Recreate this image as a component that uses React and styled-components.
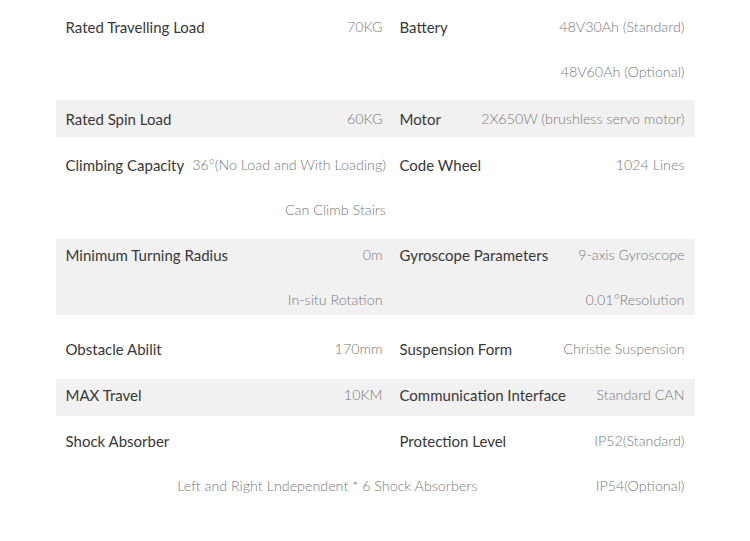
import React from 'react';
import styled, { createGlobalStyle } from 'styled-components';

const specs = [
    {
        height: 100,
        offset: -1,
        left: { label: 'Rated Travelling Load', values: ['70KG'] },
        right: { label: 'Battery', values: ['48V30Ah (Standard)', '48V60Ah (Optional)'] },
    },
    {
        height: 37,
        shaded: true,
        left: { label: 'Rated Spin Load', values: ['60KG'] },
        right: { label: 'Motor', values: ['2X650W (brushless servo motor)'] },
    },
    {
        height: 102,
        offset: -1,
        left: { label: 'Climbing Capacity', values: ['36°(No Load and With Loading)', 'Can Climb Stairs'] },
        right: { label: 'Code Wheel', values: ['1024 Lines'] },
    },
    {
        height: 76,
        shaded: true,
        left: { label: 'Minimum Turning Radius', values: ['0m', 'In-situ Rotation'] },
        right: { label: 'Gyroscope Parameters', values: ['9-axis Gyroscope', '0.01°Resolution'] },
    },
    {
        height: 64,
        offset: 2,
        left: { label: 'Obstacle Abilit', values: ['170mm'] },
        right: { label: 'Suspension Form', values: ['Christie Suspension'] },
    },
    {
        height: 37,
        shaded: true,
        offset: -3,
        left: { label: 'MAX Travel', values: ['10KM'] },
        right: { label: 'Communication Interface', values: ['Standard CAN'] },
    },
    {
        height: 96,
        offset: -1,
        left: { label: 'Shock Absorber', values: ['', 'Left and Right Lndependent * 6 Shock Absorbers'] },
        right: { label: 'Protection Level', values: ['IP52(Standard)', 'IP54(Optional)'] },
    },
];

const SpecCell = ({ label, values, side }) => (
    <Cell $side={side}>
        <Label>{label}</Label>
        <Values>
            {values.map((v, i) => (
                <Value key={i}>{v || '\u00a0'}</Value>
            ))}
        </Values>
    </Cell>
);

const App = () => {
    return (
        <>
            <GlobalStyle />
            <Table>
                {specs.map((row, i) => (
                    <Row key={i} $height={row.height} $shaded={row.shaded} $offset={row.offset || 0}>
                        <SpecCell side="left" {...row.left} />
                        <SpecCell side="right" {...row.right} />
                    </Row>
                ))}
            </Table>
        </>
    );
};

export default App;

const GlobalStyle = createGlobalStyle`
    body {
        margin: 0;
        background: #ffffff;
        font-family: 'Lato', 'Noto Sans', sans-serif;
    }
`;

const Table = styled.div`
    width: 639px;
    margin: 0 auto;
`;

// offset nudges the centred text up (negative) or down (positive)
const Row = styled.div`
    box-sizing: border-box;
    display: grid;
    grid-template-columns: 334px 305px;
    align-content: center;
    align-items: start;
    height: ${(p) => p.$height}px;
    padding-top: ${(p) => Math.max(p.$offset, 0) * 2}px;
    padding-bottom: ${(p) => Math.max(-p.$offset, 0) * 2}px;
    background: ${(p) => (p.$shaded ? '#f1f1f1' : 'transparent')};
`;

const Cell = styled.div`
    display: flex;
    justify-content: space-between;
    align-items: flex-start;
    gap: 8px;
    padding: ${(p) => (p.$side === 'left' ? '0 7px 0 10px' : '0 10px')};
`;

const Label = styled.span`
    font-size: 15px;
    line-height: 22px;
    color: #383838;
    white-space: nowrap;
`;

const Values = styled.div`
    display: flex;
    flex-direction: column;
    align-items: flex-end;
    gap: 23px;
`;

const Value = styled.span`
    font-size: 14.3px;
    line-height: 22px;
    font-weight: 300;
    color: #7a7a7a;
    white-space: nowrap;
`;
